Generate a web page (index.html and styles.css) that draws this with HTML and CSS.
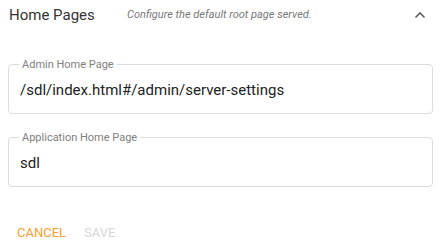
FILE: index.html
```html
<!DOCTYPE html>
<html lang="en">
<head>
    <meta charset="UTF-8">
    <title>Home Pages</title>
    <link rel="stylesheet" href="styles.css">
</head>
<body>
    <div class="panel">
        <div class="panel-header">
            <span class="panel-title">Home Pages</span>
            <span class="panel-desc">Configure the default root page served.</span>
            <svg class="chevron" width="12" height="8" viewBox="0 0 12 8">
                <path d="M1.5 6.5 L6 2 L10.5 6.5" fill="none" stroke="#5f5f5f" stroke-width="1.6"/>
            </svg>
        </div>
        <div class="panel-body">
            <fieldset class="field">
                <legend>Admin Home Page</legend>
                <input type="text" value="/sdl/index.html#/admin/server-settings">
            </fieldset>
            <fieldset class="field">
                <legend>Application Home Page</legend>
                <input type="text" value="sdl">
            </fieldset>
        </div>
        <div class="panel-actions">
            <button class="btn btn-cancel">CANCEL</button>
            <button class="btn btn-save" disabled>SAVE</button>
        </div>
    </div>
</body>
</html>
```
FILE: styles.css
```css
* {
    margin: 0;
    padding: 0;
    box-sizing: border-box;
}
body {
    font-family: Roboto, 'Liberation Sans', sans-serif;
    background-color: #fff;
    color: rgba(0, 0, 0, 0.87);
}
.panel-header {
    display: flex;
    align-items: center;
    height: 29px;
    padding: 0 14px 0 9px;
}
.panel-title {
    width: 118px;
    font-size: 15px;
    color: #333;
}
.panel-desc {
    flex: 1;
    font-size: 11px;
    font-style: italic;
    color: #777;
}
.panel-body {
    padding: 29px 7px 0 8px;
}
.field {
    border: 1px solid #dcdcdc;
    border-radius: 4px;
    padding: 0 10px 0 10px;
    height: 56px;
    margin-bottom: 17px;
}
.field legend {
    font-size: 11px;
    line-height: 13px;
    padding: 0 3px;
    color: #808080;
}
.field input {
    display: block;
    width: 100%;
    border: none;
    outline: none;
    background: transparent;
    font-family: inherit;
    font-size: 15px;
    color: #222;
    height: 24px;
    margin-top: 7px;
    padding: 0 1px;
}
.panel-actions {
    display: flex;
    padding: 18px 0 0 9px;
}
.btn {
    font-family: inherit;
    font-size: 13px;
    background: none;
    border: none;
    padding: 0 8px;
    height: 20px;
}
.btn-cancel {
    color: #f7a02c;
}
.btn-save {
    color: #d6d6d6;
    margin-left: 2px;
}
```
